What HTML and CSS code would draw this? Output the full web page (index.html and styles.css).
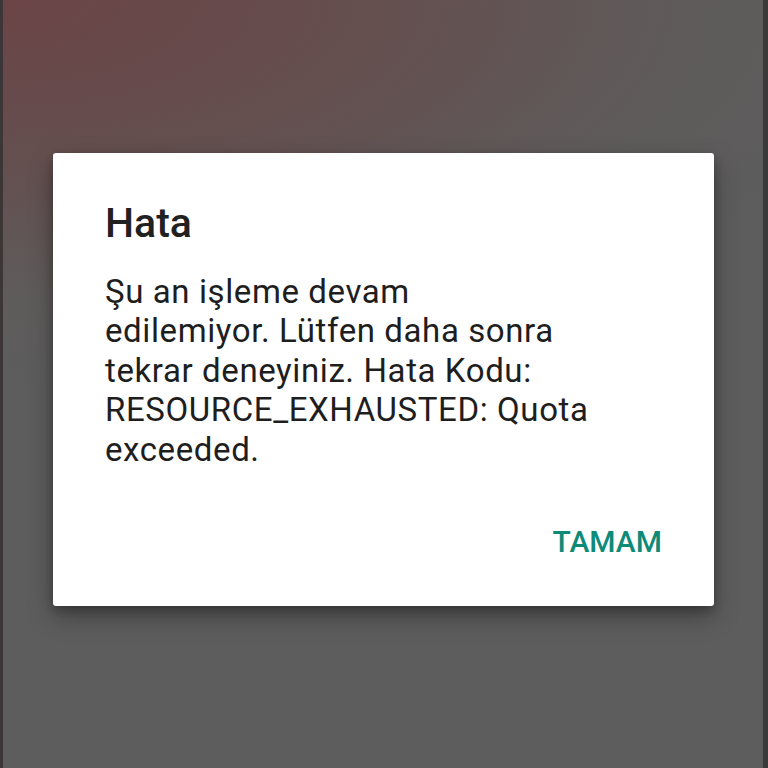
FILE: index.html
```html
<!DOCTYPE html>
<html lang="tr">
<head>
<meta charset="utf-8">
<link rel="stylesheet" href="styles.css">
</head>
<body>
<div class="screen">
  <div class="dialog">
    <h1 class="title">Hata</h1>
    <p class="message">Şu an işleme devam<br>edilemiyor. Lütfen daha sonra<br>tekrar deneyiniz. Hata Kodu:<br>RESOURCE_EXHAUSTED: Quota<br>exceeded.</p>
    <div class="actions">
      <span class="button">TAMAM</span>
    </div>
  </div>
</div>
</body>
</html>
```
FILE: styles.css
```css
html, body {
  margin: 0;
  padding: 0;
  width: 768px;
  height: 768px;
  overflow: hidden;
}
body {
  font-family: Roboto, "Noto Sans", sans-serif;
}
.screen {
  box-sizing: border-box;
  width: 768px;
  height: 768px;
  padding-top: 153px;
  padding-left: 53px;
  border-left: 3px solid #3c3637;
  border-right: 5px solid #3a3a3a;
  background: radial-gradient(ellipse 120% 50% at 0 0, #6b4446 0%, #645050 45%, #5f5b5b 75%, #5d5d5d 100%);
}
.dialog {
  box-sizing: border-box;
  margin-left: -3px;
  width: 661px;
  height: 453px;
  background: #fff;
  border-radius: 3px;
  box-shadow: 0 10px 24px rgba(0,0,0,0.35), 0 4px 8px rgba(0,0,0,0.2);
  padding: 0 52px;
  display: flex;
  flex-direction: column;
}
.title {
  margin: 0;
  padding-top: 46px;
  font-size: 41px;
  font-weight: 500;
  line-height: 48px;
  color: #212121;
}
.message {
  margin: 25px 0 0;
  font-size: 33px;
  letter-spacing: 0.6px;
  line-height: 39.4px;
  color: #1e1e1e;
  font-weight: 400;
  white-space: nowrap;
}
.actions {
  display: flex;
  justify-content: flex-end;
  margin-top: 49px;
}
.button {
  font-size: 30px;
  font-weight: 500;
  color: #0e8a78;
  line-height: 48px;
}
```
